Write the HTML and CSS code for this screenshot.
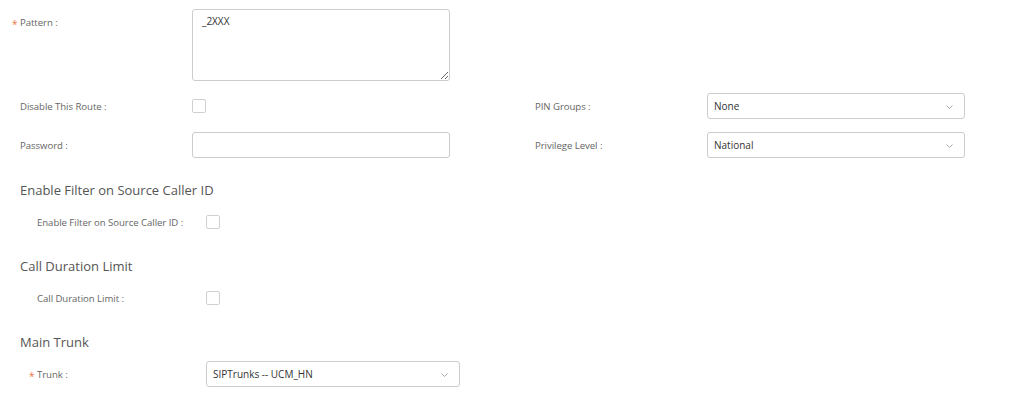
FILE: index.html
```html
<!DOCTYPE html>
<html lang="en">
<head>
  <meta charset="UTF-8" />
  <title>Outbound Route</title>
  <link rel="stylesheet" href="styles.css">
</head>
<body>
  <div class="form">
    <div class="row row-pattern">
      <div class="item">
        <label class="label required">Pattern :</label>
        <div class="control">
          <textarea class="textarea">_2XXX</textarea>
        </div>
      </div>
    </div>

    <div class="row">
      <div class="item">
        <label class="label">Disable This Route :</label>
        <div class="control"><span class="checkbox"></span></div>
      </div>
      <div class="item">
        <label class="label">PIN Groups :</label>
        <div class="control">
          <div class="select">None<span class="arrow"><svg width="7" height="4" viewBox="0 0 7 4"><path d="M0.5 0.5 L3.5 3.5 L6.5 0.5" fill="none" stroke="#aaa" stroke-width="1"/></svg></span></div>
        </div>
      </div>
    </div>

    <div class="row">
      <div class="item">
        <label class="label">Password :</label>
        <div class="control"><input class="input" type="text" /></div>
      </div>
      <div class="item">
        <label class="label">Privilege Level :</label>
        <div class="control">
          <div class="select">National<span class="arrow"><svg width="7" height="4" viewBox="0 0 7 4"><path d="M0.5 0.5 L3.5 3.5 L6.5 0.5" fill="none" stroke="#aaa" stroke-width="1"/></svg></span></div>
        </div>
      </div>
    </div>

    <h3 class="section-title">Enable Filter on Source Caller ID</h3>
    <div class="row sub">
      <div class="item">
        <label class="label">Enable Filter on Source Caller ID :</label>
        <div class="control"><span class="checkbox"></span></div>
      </div>
    </div>

    <h3 class="section-title">Call Duration Limit</h3>
    <div class="row sub">
      <div class="item">
        <label class="label">Call Duration Limit :</label>
        <div class="control"><span class="checkbox"></span></div>
      </div>
    </div>

    <h3 class="section-title">Main Trunk</h3>
    <div class="row sub">
      <div class="item">
        <label class="label required">Trunk :</label>
        <div class="control">
          <div class="select trunk">SIPTrunks -- UCM_HN<span class="arrow"><svg width="7" height="4" viewBox="0 0 7 4"><path d="M0.5 0.5 L3.5 3.5 L6.5 0.5" fill="none" stroke="#aaa" stroke-width="1"/></svg></span></div>
        </div>
      </div>
    </div>
  </div>
</body>
</html>
```

FILE: styles.css
```css
body {
  margin: 0;
  background: #fff;
  font-family: 'Open Sans', 'Noto Sans', sans-serif;
  color: #333;
}

.form {
  padding: 9px 0 0 20px;
}

.row {
  display: flex;
  align-items: center;
  height: 26px;
  margin-bottom: 13px;
}

.row-pattern {
  height: 72px;
  align-items: flex-start;
  margin-bottom: 12px;
}

.item {
  display: flex;
  align-items: center;
  flex-shrink: 0;
  width: 515px;
}

.row-pattern .item {
  align-items: flex-start;
}

.label {
  position: relative;
  width: 172px;
  font-size: 9.6px;
  color: #666;
  letter-spacing: -0.05px;
}

.row-pattern .label {
  margin-top: 7px;
}

.required::before {
  content: "*";
  position: absolute;
  left: -8px;
  top: 1px;
  color: #f0764a;
  font-size: 10px;
}

.control {
  width: 258px;
}

.textarea {
  display: block;
  box-sizing: border-box;
  width: 258px;
  height: 72px;
  padding: 4px 9px;
  border: 1px solid #ccc;
  border-radius: 3px;
  font-family: inherit;
  font-size: 10px;
  color: #333;
  resize: vertical;
  outline: none;
}

.input {
  display: block;
  box-sizing: border-box;
  width: 258px;
  height: 26px;
  border: 1px solid #ccc;
  border-radius: 3px;
  outline: none;
}

.checkbox {
  display: block;
  box-sizing: border-box;
  width: 14px;
  height: 14px;
  border: 1px solid #d0d0d0;
  border-radius: 2px;
}

.select {
  position: relative;
  box-sizing: border-box;
  width: 258px;
  height: 26px;
  padding: 0 6px;
  border: 1px solid #ccc;
  border-radius: 3px;
  font-size: 10px;
  line-height: 24px;
  color: #333;
}

.arrow {
  position: absolute;
  right: 11px;
  top: 11px;
  line-height: 0;
}

.section-title {
  margin: 0;
  height: 38px;
  line-height: 38px;
  font-size: 13px;
  font-weight: 400;
  color: #555;
}

.sub {
  padding-left: 17px;
  margin-bottom: 12px;
}

.sub .label {
  width: 169px;
}

.trunk {
  width: 254px;
}
```
